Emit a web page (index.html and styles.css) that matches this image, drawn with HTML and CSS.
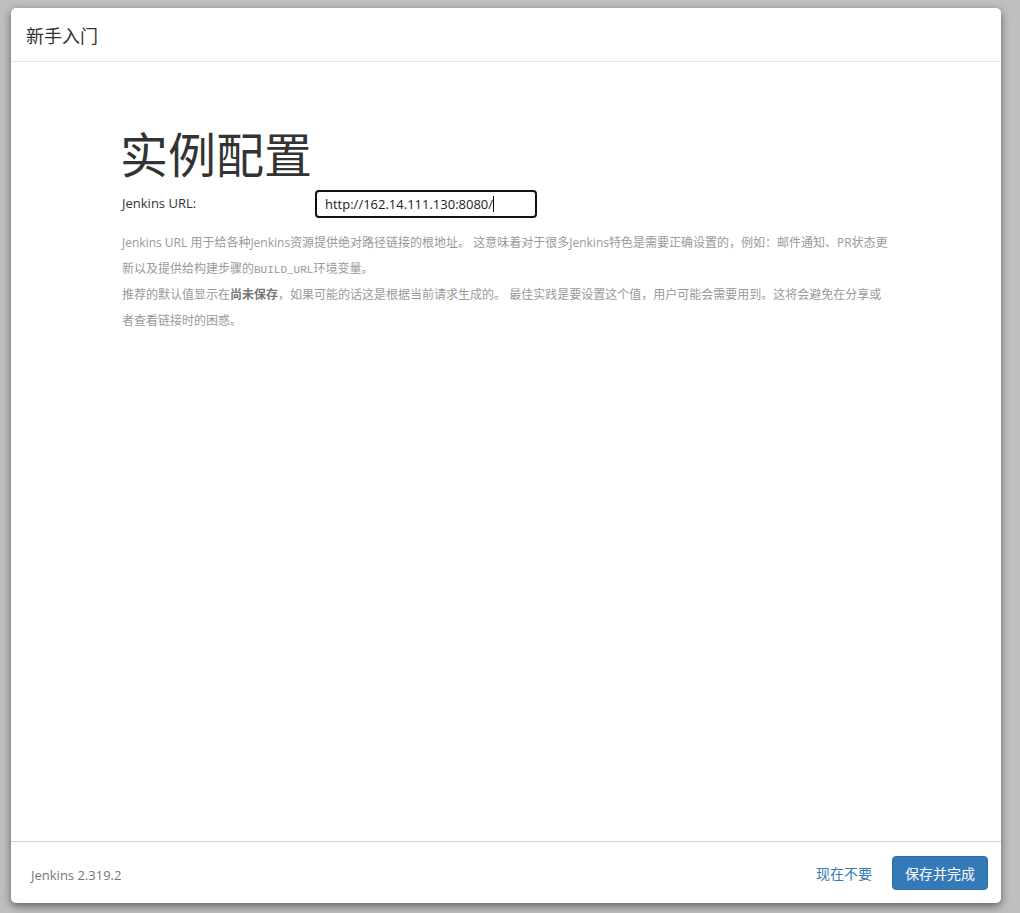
FILE: index.html
```html
<!DOCTYPE html>
<html lang="zh-CN">
<head>
<meta charset="utf-8">
<title>新手入门</title>
<link rel="stylesheet" href="styles.css">
</head>
<body>
<div class="dialog">
  <header class="dialog-header">
    <h4 class="dialog-title">新手入门</h4>
  </header>
  <main class="dialog-body">
    <div class="content">
      <h1 class="page-title">实例配置</h1>
      <div class="form-row">
        <label class="form-label" for="url">Jenkins URL:</label>
        <div class="input-box"><span class="input-text">http://162.14.111.130:8080/</span><span class="caret"></span></div>
      </div>
      <div class="help">
        <p>Jenkins URL 用于给各种Jenkins资源提供绝对路径链接的根地址。 这意味着对于很多Jenkins特色是需要正确设置的，例如：邮件通知、PR状态更新以及提供给构建步骤的<code>BUILD_URL</code>环境变量。</p>
        <p>推荐的默认值显示在<strong>尚未保存</strong>，如果可能的话这是根据当前请求生成的。 最佳实践是要设置这个值，用户可能会需要用到。这将会避免在分享或者查看链接时的困惑。</p>
      </div>
    </div>
  </main>
  <footer class="dialog-footer">
    <span class="version">Jenkins 2.319.2</span>
    <div class="actions">
      <a class="skip-link">现在不要</a>
      <button class="btn-primary">保存并完成</button>
    </div>
  </footer>
</div>
</body>
</html>
```

FILE: styles.css
```css
html, body {
  margin: 0;
  padding: 0;
  height: 100%;
}
body {
  background: #bfbfbf;
  font-family: "Open Sans", "Noto Sans CJK SC", sans-serif;
  color: #333;
  padding: 8px 19px 10px 11px;
  box-sizing: border-box;
}
.dialog {
  height: 100%;
  background: #fff;
  border-radius: 5px;
  box-shadow: 0 3px 9px rgba(0,0,0,0.5);
  display: flex;
  flex-direction: column;
  overflow: hidden;
}
.dialog-header {
  height: 54px;
  box-sizing: border-box;
  border-bottom: 1px solid #e5e5e5;
  padding: 0 15px;
  display: flex;
  align-items: center;
}
.dialog-title {
  margin: 0;
  font-size: 18px;
  font-weight: 400;
  font-family: "Noto Sans CJK SC", sans-serif;
  color: #333;
}
.dialog-body {
  flex: 1;
}
.content {
  padding: 60px 0 0 109px;
  width: 771px;
}
.page-title {
  margin: 0;
  font-family: "Noto Sans CJK SC", sans-serif;
  font-size: 48px;
  font-weight: 400;
  line-height: 60px;
  color: #333;
}
.form-row {
  display: flex;
  align-items: flex-start;
  margin-top: 8px;
}
.form-label {
  width: 193px;
  padding-left: 2px;
  font-size: 13px;
  line-height: 18px;
  padding-top: 4px;
  color: #333;
}
.input-box {
  width: 210px;
  height: 24px;
  border: 2px solid #111;
  border-radius: 4px;
  display: flex;
  align-items: center;
  padding-left: 8px;
  font-size: 13px;
  color: #222;
}
.caret {
  display: inline-block;
  width: 1px;
  height: 16px;
  background: #000;
}
.help {
  margin-top: 12px;
  padding-left: 2px;
  font-size: 12px;
  line-height: 26px;
  color: #999;
}
.help p {
  margin: 0;
}
.help code {
  font-family: "Liberation Mono", monospace;
  font-size: 11px;
  line-height: 1;
}
.help strong {
  color: #777;
  font-weight: 700;
}
.dialog-footer {
  height: 62px;
  box-sizing: border-box;
  border-top: 1px solid #d0d0d0;
  display: flex;
  align-items: center;
  justify-content: space-between;
  padding: 0 13px 0 20px;
}
.version {
  font-size: 13px;
  color: #777;
  margin-top: 4px;
}
.actions {
  display: flex;
  align-items: center;
  gap: 20px;
}
.skip-link {
  font-family: "Noto Sans CJK SC", sans-serif;
  font-size: 14px;
  color: #337ab7;
}
.btn-primary {
  font-family: "Noto Sans CJK SC", sans-serif;
  font-size: 14px;
  color: #fff;
  background: #337ab7;
  border: 1px solid #2e6da4;
  border-radius: 4px;
  height: 34px;
  padding: 0 12px;
}
```
